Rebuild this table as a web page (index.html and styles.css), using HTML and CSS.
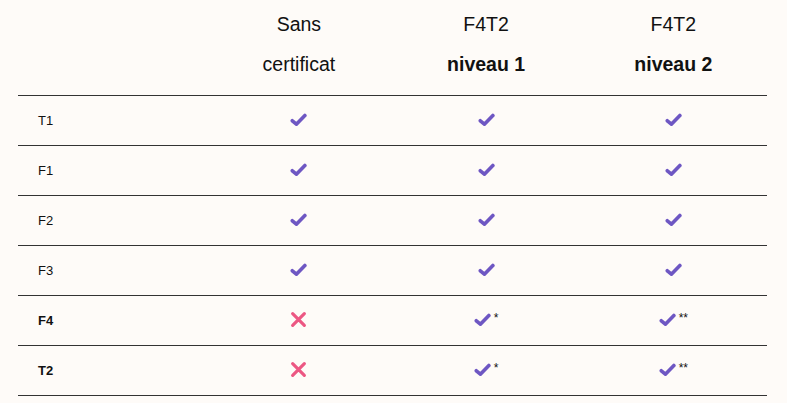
FILE: index.html
```
<!DOCTYPE html>
<html lang="fr">
<head>
<meta charset="utf-8">
<link rel="stylesheet" href="styles.css">
</head>
<body>
<div class="table">
  <div class="row head">
    <div class="cell"></div>
    <div class="cell hcell"><span>Sans</span><span>certificat</span></div>
    <div class="cell hcell"><span>F4T2</span><span class="b">niveau 1</span></div>
    <div class="cell hcell"><span>F4T2</span><span class="b">niveau 2</span></div>
  </div>

  <div class="row">
    <div class="cell label">T1</div>
    <div class="cell mark"><svg class="ck" viewBox="0 0 16 14"><path d="M2.2 8.2 L6 11.4 L14 3.2"/></svg></div>
    <div class="cell mark"><svg class="ck" viewBox="0 0 16 14"><path d="M2.2 8.2 L6 11.4 L14 3.2"/></svg></div>
    <div class="cell mark"><svg class="ck" viewBox="0 0 16 14"><path d="M2.2 8.2 L6 11.4 L14 3.2"/></svg></div>
  </div>
  <div class="row">
    <div class="cell label">F1</div>
    <div class="cell mark"><svg class="ck" viewBox="0 0 16 14"><path d="M2.2 8.2 L6 11.4 L14 3.2"/></svg></div>
    <div class="cell mark"><svg class="ck" viewBox="0 0 16 14"><path d="M2.2 8.2 L6 11.4 L14 3.2"/></svg></div>
    <div class="cell mark"><svg class="ck" viewBox="0 0 16 14"><path d="M2.2 8.2 L6 11.4 L14 3.2"/></svg></div>
  </div>
  <div class="row">
    <div class="cell label">F2</div>
    <div class="cell mark"><svg class="ck" viewBox="0 0 16 14"><path d="M2.2 8.2 L6 11.4 L14 3.2"/></svg></div>
    <div class="cell mark"><svg class="ck" viewBox="0 0 16 14"><path d="M2.2 8.2 L6 11.4 L14 3.2"/></svg></div>
    <div class="cell mark"><svg class="ck" viewBox="0 0 16 14"><path d="M2.2 8.2 L6 11.4 L14 3.2"/></svg></div>
  </div>
  <div class="row">
    <div class="cell label">F3</div>
    <div class="cell mark"><svg class="ck" viewBox="0 0 16 14"><path d="M2.2 8.2 L6 11.4 L14 3.2"/></svg></div>
    <div class="cell mark"><svg class="ck" viewBox="0 0 16 14"><path d="M2.2 8.2 L6 11.4 L14 3.2"/></svg></div>
    <div class="cell mark"><svg class="ck" viewBox="0 0 16 14"><path d="M2.2 8.2 L6 11.4 L14 3.2"/></svg></div>
  </div>
  <div class="row">
    <div class="cell label b">F4</div>
    <div class="cell mark"><svg class="x" viewBox="0 0 16 16"><path d="M2.5 2.5 L13.5 13.5 M13.5 2.5 L2.5 13.5"/></svg></div>
    <div class="cell mark"><svg class="ck" viewBox="0 0 16 14"><path d="M2.2 8.2 L6 11.4 L14 3.2"/></svg><sup>*</sup></div>
    <div class="cell mark"><svg class="ck" viewBox="0 0 16 14"><path d="M2.2 8.2 L6 11.4 L14 3.2"/></svg><sup>**</sup></div>
  </div>
  <div class="row">
    <div class="cell label b">T2</div>
    <div class="cell mark"><svg class="x" viewBox="0 0 16 16"><path d="M2.5 2.5 L13.5 13.5 M13.5 2.5 L2.5 13.5"/></svg></div>
    <div class="cell mark"><svg class="ck" viewBox="0 0 16 14"><path d="M2.2 8.2 L6 11.4 L14 3.2"/></svg><sup>*</sup></div>
    <div class="cell mark"><svg class="ck" viewBox="0 0 16 14"><path d="M2.2 8.2 L6 11.4 L14 3.2"/></svg><sup>**</sup></div>
  </div>
</div>
</body>
</html>
```
FILE: styles.css
```
html, body {
  margin: 0;
  padding: 0;
  background: #fefbf8;
}
body {
  font-family: "Liberation Sans", Arial, sans-serif;
  color: #111;
  padding-left: 18px;
}
.table {
  width: 749px;
}
.row {
  display: grid;
  grid-template-columns: repeat(4, 1fr);
  height: 49px;
  border-bottom: 1px solid #333;
}
.row.head {
  height: 95px;
}
.cell {
  display: flex;
  align-items: center;
  justify-content: center;
}
.hcell {
  flex-direction: column;
  justify-content: flex-start;
  font-size: 19.5px;
  line-height: 40px;
  padding-top: 4px;
}
.b {
  font-weight: bold;
}
.label {
  justify-content: flex-start;
  padding-left: 20px;
  font-size: 13px;
}
.mark {
  padding-bottom: 2px;
}
.ck {
  width: 17px;
  height: 15px;
  fill: none;
  stroke: #6e57c3;
  stroke-width: 3.4;
  stroke-linecap: round;
  stroke-linejoin: round;
}
.x {
  width: 17px;
  height: 17px;
  fill: none;
  stroke: #ec5783;
  stroke-width: 3;
  stroke-linecap: round;
}
sup {
  font-size: 12px;
  line-height: 1;
  align-self: flex-start;
  margin-top: 16px;
  margin-left: 3px;
}
```
